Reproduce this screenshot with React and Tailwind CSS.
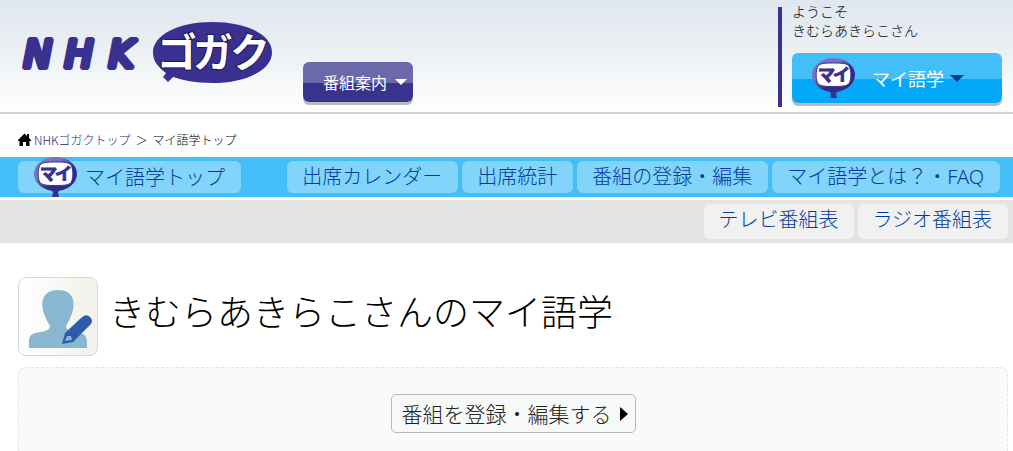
const navItems = ["出席カレンダー", "出席統計", "番組の登録・編集", "マイ語学とは？・FAQ"];

const tableItems = ["テレビ番組表", "ラジオ番組表"];

function Logo() {
  return (
    <svg width="250" height="61" viewBox="0 0 250 61" role="img" aria-label="NHKゴガク">
      <text
        x="2 43 87"
        y="45"
        className="font-['DejaVu_Sans',sans-serif] font-normal italic"
        fontSize="37"
        fill="#39308f"
        stroke="#39308f"
        strokeWidth="6"
        strokeLinejoin="round"
      >
        NHK
      </text>
      <path
        d="M131 30.500C131 13 156 0 190.500 0S250 13 250 30.500 224 61 190.500 61C174 61 160 58 151 55L146 60 141 55 144 51C136 45 131 39 131 30.500Z"
        fill="#39308f"
      />
      <text
        x="135 171 208"
        y="45"
        className="font-['Noto_Sans_CJK_JP',sans-serif] font-bold"
        fontSize="40"
        fill="#fff"
        stroke="#1d1560"
        strokeWidth="2"
        paintOrder="stroke"
      >
        ゴガク
      </text>
    </svg>
  );
}

function SignIcon({ id, className }) {
  return (
    <svg width="43" height="40" viewBox="0 0 43 40" className={className} aria-hidden="true">
      <defs>
        <linearGradient id={id} x1="0" y1="0" x2="1" y2="1">
          <stop offset="0.350" stopColor="#7673c4" />
          <stop offset="0.600" stopColor="#322a86" />
        </linearGradient>
      </defs>
      <path d="M15 31H28L24 35 25 40H18L19 35Z" fill="#39308f" />
      <ellipse cx="21.500" cy="17" rx="21.500" ry="17" fill={`url(#${id})`} />
      <path
        d="M21.500 5C31 5 35 5.500 37 8 39.500 12 39.500 22 37 25.500 35 28 31 28.500 21.500 28.500S8 28 6 25.500C3.500 22 3.500 12 6 8 8 5.500 12 5 21.500 5Z"
        fill="#fff"
        stroke="#39308f"
      />
      <text
        x="6 21"
        y="23"
        className="font-['Noto_Sans_CJK_JP',sans-serif] font-bold"
        fontSize="17"
        fill="#39308f"
        stroke="#39308f"
        strokeWidth="1"
      >
        マイ
      </text>
    </svg>
  );
}

function HomeIcon() {
  return (
    <svg width="13" height="13" viewBox="0 0 13 13" aria-hidden="true">
      <path d="M6.500 0.500 9 3V1H11V5L13 7V8H11.500V13H8V9H5V13H1.500V8H0V7Z" fill="#000" />
    </svg>
  );
}

function Avatar() {
  return (
    <div className="h-[79px] w-20 shrink-0 rounded-lg border border-[#d8d8d8] bg-linear-to-r from-white to-[#f1f1ea]">
      <svg width="78" height="77" viewBox="0 0 78 77" aria-hidden="true">
        <path
          d="M10 70V64C10 51 22 57 30 51 33 48 28 45 26 38 20 24 24 12 39 12S58 24 52 38C50 45 45 48 48 51 56 57 68 51 68 64V70Z"
          fill="#8ab7d0"
        />
        <path d="M43 66 46 55 62 40Q67 35 71 39T71 47L54 64Z" fill="#2f5bab" />
        <path d="M46 63 48 58 52 58 53 62Z" fill="#8ab7d0" />
      </svg>
    </div>
  );
}

export default function App() {
  return (
    <div className="flex min-h-screen flex-col bg-white font-['Noto_Sans_CJK_JP',sans-serif] font-light text-black">
      <header className="flex items-start border-b-2 border-[#d2d2d2] bg-linear-to-b from-[#dfe6ef] via-[#edf1f4] to-white pr-[11px] pb-[5px]">
        <a href="#" className="mt-[22px] ml-[22px]">
          <Logo />
        </a>
        <button className="mt-[62px] ml-[31px] flex h-10 w-[110px] items-center justify-end gap-2 rounded-md bg-linear-to-b from-[#6c69ab] from-52% to-[#39338e] to-52% pr-1.5 text-base font-normal text-white shadow-[0_3px_0_#bbb]">
          番組案内
          <svg width="12" height="6" viewBox="0 0 12 6" aria-hidden="true">
            <path d="M0 0H12L6 6Z" fill="#fff" />
          </svg>
        </button>
        <div className="mt-[7px] ml-auto border-l-4 border-[#39308f] pb-1 pl-2.5">
          <p className="-mt-[5px] text-sm leading-[19px]">
            ようこそ
            <br />
            きむらあきらこさん
          </p>
          <button className="mt-[13px] flex h-[50px] w-[210px] items-center rounded-md bg-linear-to-b from-[#43bef8] from-52% to-[#04a8f8] to-52% pl-5 text-lg font-normal text-white shadow-[0_3px_0_#bbb]">
            <SignIcon id="sign-header" />
            <span className="mr-1.5 ml-[17px]">マイ語学</span>
            <svg width="14" height="7" viewBox="0 0 14 7" aria-hidden="true">
              <path d="M0 0H14L7 7Z" fill="#003b9c" />
            </svg>
          </button>
        </div>
      </header>

      <nav className="flex h-[43px] items-center gap-[3px] px-[18px] pt-2 text-xs">
        <HomeIcon />
        <a href="#" className="text-[#1d1a80]">
          NHKゴガクトップ
        </a>
        <span className="mx-0.5">＞</span>
        <span>マイ語学トップ</span>
      </nav>

      <nav className="flex h-10 items-center justify-between bg-[#43bef8] pr-[13px] pl-[18px] text-xl text-[#003b9c]">
        <a href="#" className="flex h-8 items-center gap-2 rounded-md bg-[#82d4fa] px-4 leading-8">
          <SignIcon id="sign-nav" className="-my-1" />
          マイ語学トップ
        </a>
        <div className="flex gap-1 font-['Noto_Sans','Noto_Sans_CJK_JP',sans-serif]">
          {navItems.map((item) => (
            <a key={item} href="#" className="h-8 rounded-md bg-[#82d4fa] pr-4 pl-[15px] leading-8">
              {item}
            </a>
          ))}
        </div>
      </nav>

      <nav className="mt-[3px] flex justify-end gap-1 bg-[#e4e4e4] py-1 pr-[5px] text-xl text-[#003b9c]">
        {tableItems.map((item) => (
          <a key={item} href="#" className="h-[35px] rounded-md bg-[#f1f1f1] pr-4 pl-3.5 leading-[30px]">
            {item}
          </a>
        ))}
      </nav>

      <main className="flex flex-1 flex-col pt-[34px] pr-[5px] pl-[18px]">
        <div className="flex items-start gap-[11px]">
          <Avatar />
          <h1 className="text-4xl leading-[66px]">きむらあきらこさんのマイ語学</h1>
        </div>
        <section className="mt-[11px] flex flex-1 items-start justify-center rounded-t-lg border border-b-0 border-dashed border-[#e4e4e4] bg-[#fafafa] pt-[26px]">
          <button className="flex h-[39px] items-center gap-2 rounded-[5px] border border-[#b8b8b8] bg-[#f7f9f9] pr-[7px] pl-2.5 text-[21px] text-[#222]">
            番組を登録・編集する
            <svg width="8" height="14" viewBox="0 0 8 14" aria-hidden="true">
              <path d="M0 0 8 7 0 14Z" fill="#000" />
            </svg>
          </button>
        </section>
      </main>
    </div>
  );
}
